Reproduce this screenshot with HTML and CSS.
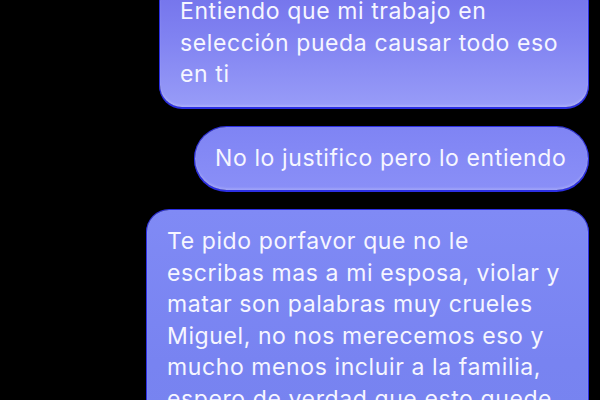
FILE: index.html
```html
<!DOCTYPE html>
<html lang="es">
<head>
    <meta charset="UTF-8">
    <meta name="viewport" content="width=device-width, initial-scale=1.0">
    <title>Mensajes</title>
    <link rel="stylesheet" href="styles.css">
</head>
<body>
    <div class="thread">
        <div class="bubble bubble-first">
            Entiendo que mi trabajo en<br>
            selección pueda causar todo eso<br>
            en ti
        </div>

        <div class="bubble bubble-short">
            No lo justifico pero lo entiendo
        </div>

        <div class="bubble bubble-long">
            Te pido porfavor que no le<br>
            escribas mas a mi esposa, violar y<br>
            matar son palabras muy crueles<br>
            Miguel, no nos merecemos eso y<br>
            mucho menos incluir a la familia,<br>
            espero de verdad que esto quede<br>
            aquí
        </div>
    </div>
</body>
</html>
```

FILE: styles.css
```css
:root {
    --bg-color: #000000;
    --text-color: #f6f6ff;
    --edge-color: #2c2fe2;
}

* {
    margin: 0;
    padding: 0;
    box-sizing: border-box;
}

body {
    height: 100vh;
    overflow: hidden;
    background-color: var(--bg-color);
    font-family: Inter, "Noto Sans", sans-serif;
}

.thread {
    display: flex;
    flex-direction: column;
    align-items: flex-end;
    gap: 20px;
    margin-top: -20px;
    padding-right: 12px;
}

.bubble {
    padding: 16px 20px;
    border-radius: 22px;
    color: var(--text-color);
    font-size: 23px;
    line-height: 31.5px;
    letter-spacing: 0.6px;
    white-space: nowrap;
    box-shadow: 0 0 0 1px var(--edge-color), 0 1px 0 1px var(--edge-color),
        inset 0 -2px 2px rgba(255, 255, 255, 0.18);
}

.bubble-first {
    width: 428px;
    background: linear-gradient(180deg, #7170ea 0%, #8082f1 45%, #989cf8 100%);
}

.bubble-short {
    width: 393px;
    border-radius: 32px;
    background: linear-gradient(180deg, #7f84f4 0%, #8a8ff7 100%);
}

.bubble-long {
    width: 441px;
    background: linear-gradient(180deg, #808af5 0%, #7883f1 60%, #7684ef 100%);
}
```
